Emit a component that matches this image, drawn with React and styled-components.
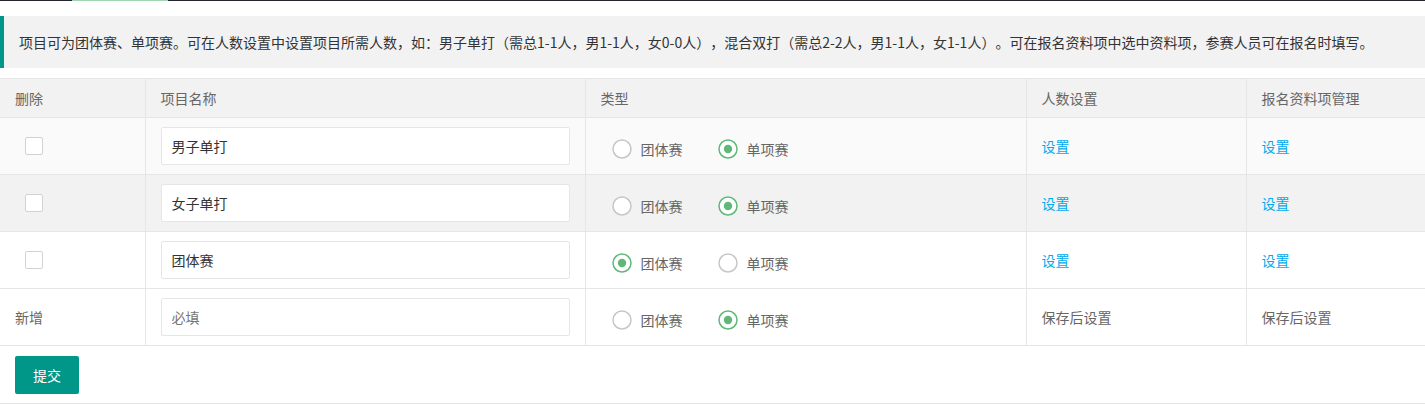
import React from "react";
import styled, { createGlobalStyle } from "styled-components";

const GlobalStyle = createGlobalStyle`
  body {
    margin: 0;
    background: #fff;
    font-family: "Noto Sans CJK SC", "Noto Sans", sans-serif;
    font-size: 14px;
    color: #333;
    text-spacing-trim: space-all;
  }
`;

const rows = [
  { name: "男子单打", type: "single", bg: "#fafafa" },
  { name: "女子单打", type: "single", bg: "#f2f2f2" },
  { name: "团体赛", type: "team", bg: "#fff" },
];

const Radio = ({ checked, label }) => (
  <RadioItem>
    <svg width="20" height="20" viewBox="0 0 20 20">
      <circle
        cx="10"
        cy="10"
        r="9"
        fill="#fff"
        stroke={checked ? "#5FB878" : "#c6c6c6"}
        strokeWidth="1.5"
      />
      {checked && <circle cx="10" cy="10" r="4.2" fill="#5FB878" />}
    </svg>
    <span>{label}</span>
  </RadioItem>
);

const TypeRadios = ({ type }) => (
  <RadioGroup>
    <Radio checked={type === "team"} label="团体赛" />
    <Radio checked={type === "single"} label="单项赛" />
  </RadioGroup>
);

const App = () => {
  return (
    <Page>
      <GlobalStyle />
      <NavEdge>
        <NavBar />
      </NavEdge>

      <Quote>
        项目可为团体赛、单项赛。可在人数设置中设置项目所需人数，如：男子单打（需总1-1人，男1-1人，女0-0人），混合双打（需总2-2人，男1-1人，女1-1人）。可在报名资料项中选中资料项，参赛人员可在报名时填写。
      </Quote>

      <Table>
        <colgroup>
          <col style={{ width: 145 }} />
          <col style={{ width: 440 }} />
          <col style={{ width: 441 }} />
          <col style={{ width: 220 }} />
          <col />
        </colgroup>
        <thead>
          <tr>
            <Th>删除</Th>
            <Th>项目名称</Th>
            <Th>类型</Th>
            <Th>人数设置</Th>
            <Th>报名资料项管理</Th>
          </tr>
        </thead>
        <tbody>
          {rows.map((r) => (
            <Row key={r.name} $bg={r.bg}>
              <Td>
                <Checkbox />
              </Td>
              <Td>
                <Input defaultValue={r.name} />
              </Td>
              <Td>
                <TypeRadios type={r.type} />
              </Td>
              <Td>
                <Link href="#">设置</Link>
              </Td>
              <Td>
                <Link href="#">设置</Link>
              </Td>
            </Row>
          ))}
          <Row $bg="#fff">
            <Td>新增</Td>
            <Td>
              <Input placeholder="必填" />
            </Td>
            <Td>
              <TypeRadios type="single" />
            </Td>
            <Td>保存后设置</Td>
            <Td>保存后设置</Td>
          </Row>
        </tbody>
      </Table>

      <Actions>
        <Button>提交</Button>
      </Actions>
    </Page>
  );
};

export default App;

const Page = styled.div`
  width: 100%;
`;

const NavEdge = styled.div`
  height: 1px;
  background: #23262e;
  display: flex;
`;

const NavBar = styled.div`
  margin-left: 72px;
  width: 96px;
  background: #a3d6b2;
`;

const Quote = styled.div`
  margin: 15px 0 10px;
  padding: 15px;
  border-left: 4px solid #009688;
  background: #f2f2f2;
  line-height: 22px;
  font-size: 14px;
  color: #333;
  white-space: nowrap;
  overflow: hidden;
`;

const Table = styled.table`
  width: 100%;
  border-collapse: collapse;
  table-layout: fixed;
  color: #666;
`;

const Th = styled.th`
  background: #f2f2f2;
  text-align: left;
  font-weight: normal;
  padding: 9px 15px;
  line-height: 20px;
  font-size: 14px;
  color: #666;
  border: 1px solid #e6e6e6;
  &:first-child {
    border-left: none;
  }
  &:last-child {
    border-right: none;
  }
`;

const Row = styled.tr`
  background: ${({ $bg }) => $bg};
`;

const Td = styled.td`
  padding: 9px 15px;
  height: 38px;
  line-height: 20px;
  font-size: 14px;
  color: #666;
  border: 1px solid #e6e6e6;
  vertical-align: middle;
  &:first-child {
    border-left: none;
  }
  &:last-child {
    border-right: none;
  }
`;

const Checkbox = styled.span`
  display: block;
  width: 16px;
  height: 16px;
  margin-left: 10px;
  border: 1px solid #d2d2d2;
  border-radius: 2px;
  background: #fff;
`;

const Input = styled.input`
  display: block;
  width: 100%;
  height: 38px;
  box-sizing: border-box;
  padding: 0 10px;
  border: 1px solid #e6e6e6;
  border-radius: 2px;
  background: #fff;
  font-family: inherit;
  font-size: 14px;
  color: #333;
  outline: none;
  &::placeholder {
    color: #777;
  }
`;

const RadioGroup = styled.div`
  display: flex;
  align-items: center;
  gap: 35px;
  height: 38px;
  box-sizing: border-box;
  padding: 5px 0 0 11px;
`;

const RadioItem = styled.label`
  display: flex;
  align-items: center;
  gap: 9px;
  color: #666;
  font-size: 14px;
  svg {
    display: block;
    flex-shrink: 0;
  }
`;

const Link = styled.a`
  color: #01aaed;
  text-decoration: none;
`;

const Actions = styled.div`
  padding: 10px 15px 9px;
  border-bottom: 1px solid #e6e6e6;
`;

const Button = styled.button`
  height: 38px;
  padding: 0 18px;
  border: none;
  border-radius: 2px;
  background: #009688;
  color: #fff;
  font-family: inherit;
  font-size: 14px;
  cursor: pointer;
`;
